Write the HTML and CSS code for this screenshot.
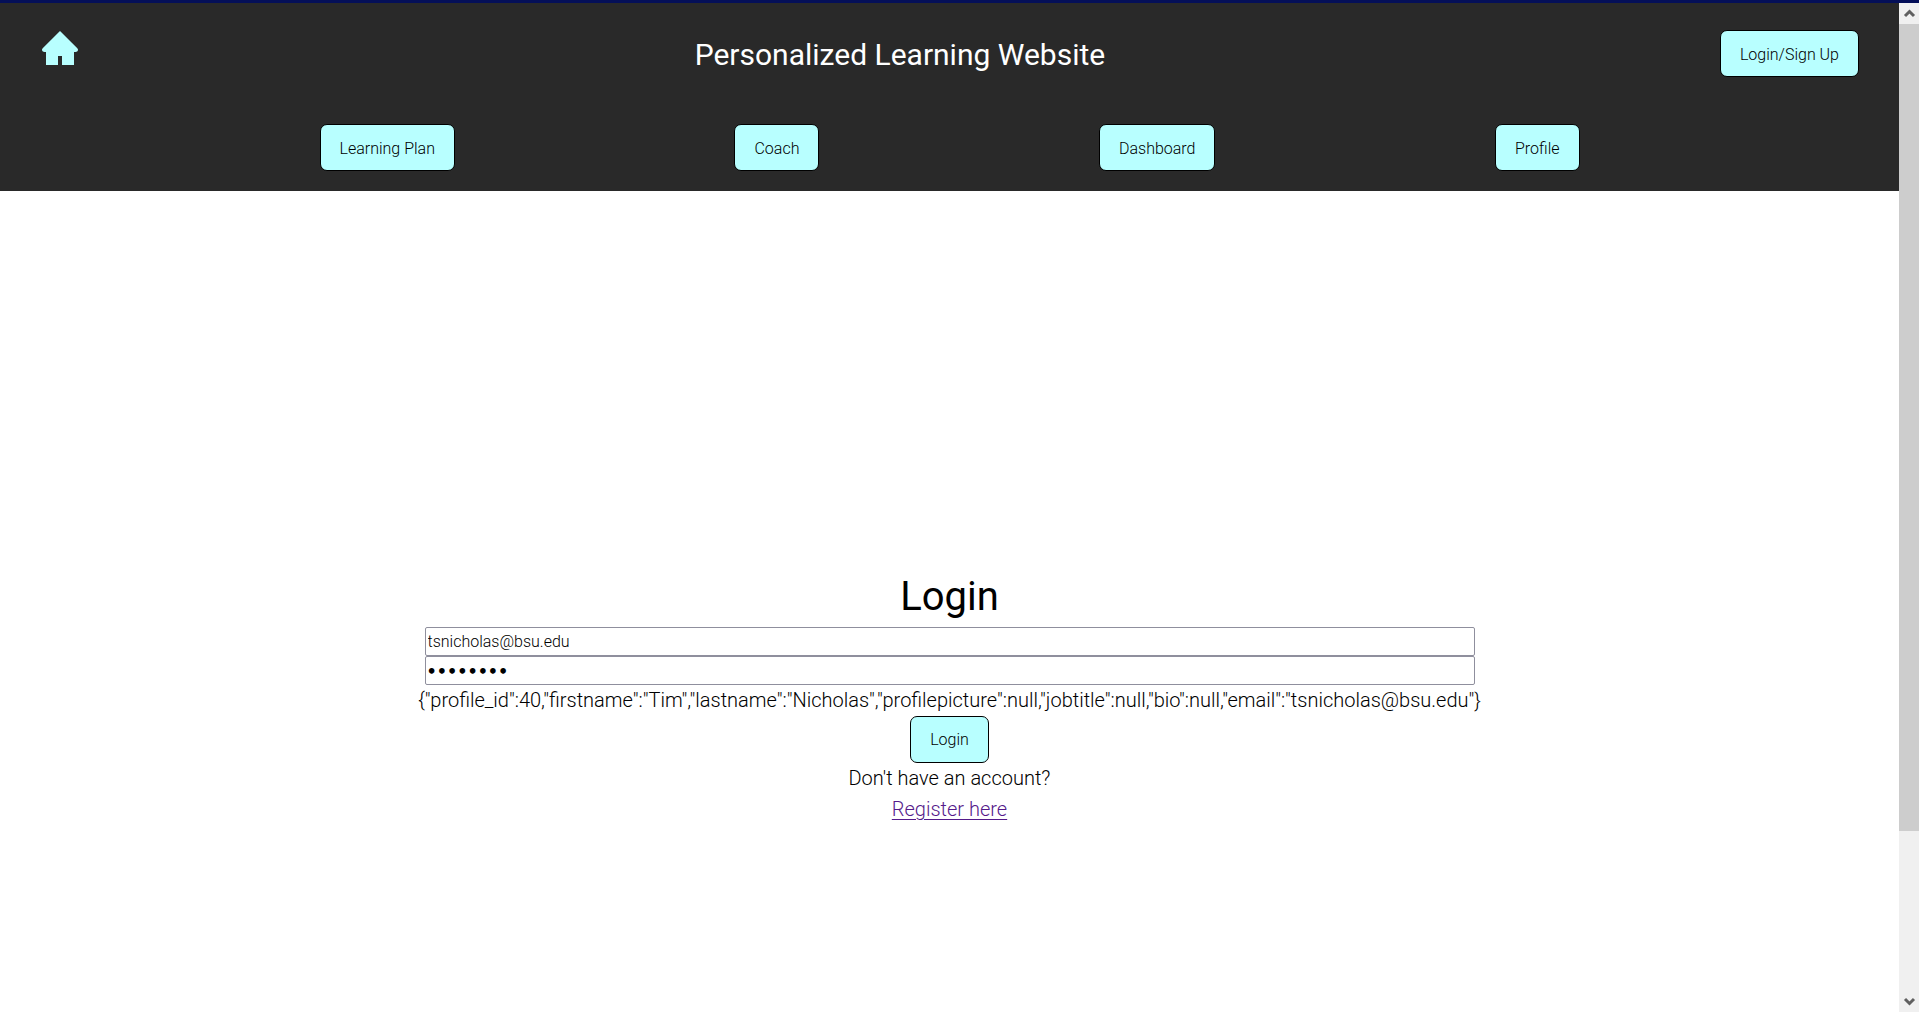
FILE: index.html
```html
<!DOCTYPE html>
<html lang="en">
<head>
  <meta charset="utf-8">
  <meta name="viewport" content="width=device-width, initial-scale=1">
  <title>Personalized Learning Website</title>
  <link rel="stylesheet" href="styles.css">
</head>
<body>
  <div class="window">
    <div class="page">
      <header class="header">
        <div class="topbar">
          <a class="home" href="#" aria-label="Home">
            <svg viewBox="0 0 40 40" width="40" height="40" aria-hidden="true">
              <path d="M20 1 L37.300 18.300 Q38.200 19.200 38 20.300 Q37.600 22 35.500 22 H34 V35 H22 V26 H18 V35 H6 V22 H4.500 Q2.400 22 2 20.300 Q1.800 19.200 2.700 18.300 Z"/>
            </svg>
          </a>
          <h1 class="title">Personalized Learning Website</h1>
          <button class="button" type="button">Login/Sign Up</button>
        </div>
        <nav class="nav">
          <button class="button" type="button">Learning Plan</button>
          <button class="button" type="button">Coach</button>
          <button class="button" type="button">Dashboard</button>
          <button class="button" type="button">Profile</button>
        </nav>
      </header>
      <main class="main">
        <form class="login">
          <h2 class="heading">Login</h2>
          <input class="field" type="email" aria-label="Email" value="tsnicholas@bsu.edu">
          <input class="field password" type="password" aria-label="Password" value="password">
          <p class="line">{"profile_id":40,"firstname":"Tim","lastname":"Nicholas","profilepicture":null,"jobtitle":null,"bio":null,"email":"tsnicholas@bsu.edu"}</p>
          <button class="button" type="button">Login</button>
          <p class="line">Don't have an account?</p>
          <p class="line"><a class="register" href="#">Register here</a></p>
        </form>
      </main>
    </div>
    <div class="scrollbar" aria-hidden="true">
      <svg class="arrow" viewBox="0 0 20 21" width="20" height="21"><path d="M6 13 L10.500 8.500 L15 13"/></svg>
      <div class="track"><div class="thumb"></div></div>
      <svg class="arrow" viewBox="0 0 20 21" width="20" height="21"><path d="M6 8 L10.500 12.500 L15 8"/></svg>
    </div>
  </div>
</body>
</html>
```
FILE: styles.css
```css
* {
  box-sizing: border-box;
}

body {
  margin: 0;
  font-family: Roboto, "Open Sans", sans-serif;
  font-size: 20px;
  font-weight: 300;
  line-height: 30px;
  color: #000;
  background: #fff;
}

.window {
  display: flex;
  height: 100vh;
  border-top: 3px solid #040f58;
}

.page {
  flex: 1;
  min-width: 0;
  overflow: hidden;
}

.header {
  padding: 27px 40px 20px;
  background: #292929;
}

.topbar {
  display: flex;
  justify-content: space-between;
  align-items: flex-start;
}

.home {
  display: flex;
}

.home svg {
  fill: #b8ffff;
}

.title {
  margin: 0;
  font-size: 30px;
  font-weight: 400;
  line-height: 50px;
  color: #fff;
}

.nav {
  display: flex;
  justify-content: space-evenly;
  margin-top: 44px;
}

.button {
  height: 47px;
  padding: 2px 19px 0;
  border: 1px solid #000;
  border-radius: 7px;
  background: #b8ffff;
  color: #000;
  font: inherit;
  font-size: 16px;
}

.main {
  display: flex;
  justify-content: center;
  align-items: center;
  height: calc(100vh - 3px);
}

.login {
  display: flex;
  flex-direction: column;
  align-items: center;
}

.heading {
  margin: 0;
  font-size: 40px;
  font-weight: 400;
  line-height: 60px;
}

.field {
  width: 1050px;
  max-width: 100%;
  height: 29px;
  padding: 2px 2px 0;
  border: 1px solid #8f8f9d;
  border-radius: 2px;
  background: #fff;
  color: #000;
  font: inherit;
  font-size: 16px;
}

.password {
  padding: 4px 1px 0;
  font-family: "DejaVu Sans", sans-serif;
  font-weight: 700;
}

.line {
  margin: 0;
  line-height: 31px;
  text-align: center;
}

.register {
  color: #551a8b;
  text-decoration-thickness: 1px;
  text-underline-offset: 3px;
}

.scrollbar {
  display: flex;
  flex-direction: column;
  width: 20px;
  background: #f0f0f0;
}

.track {
  flex: 1;
}

.thumb {
  height: 83.5%;
  background: #cdcdcd;
}

.arrow {
  fill: none;
  stroke: #606060;
  stroke-width: 3;
}
```
